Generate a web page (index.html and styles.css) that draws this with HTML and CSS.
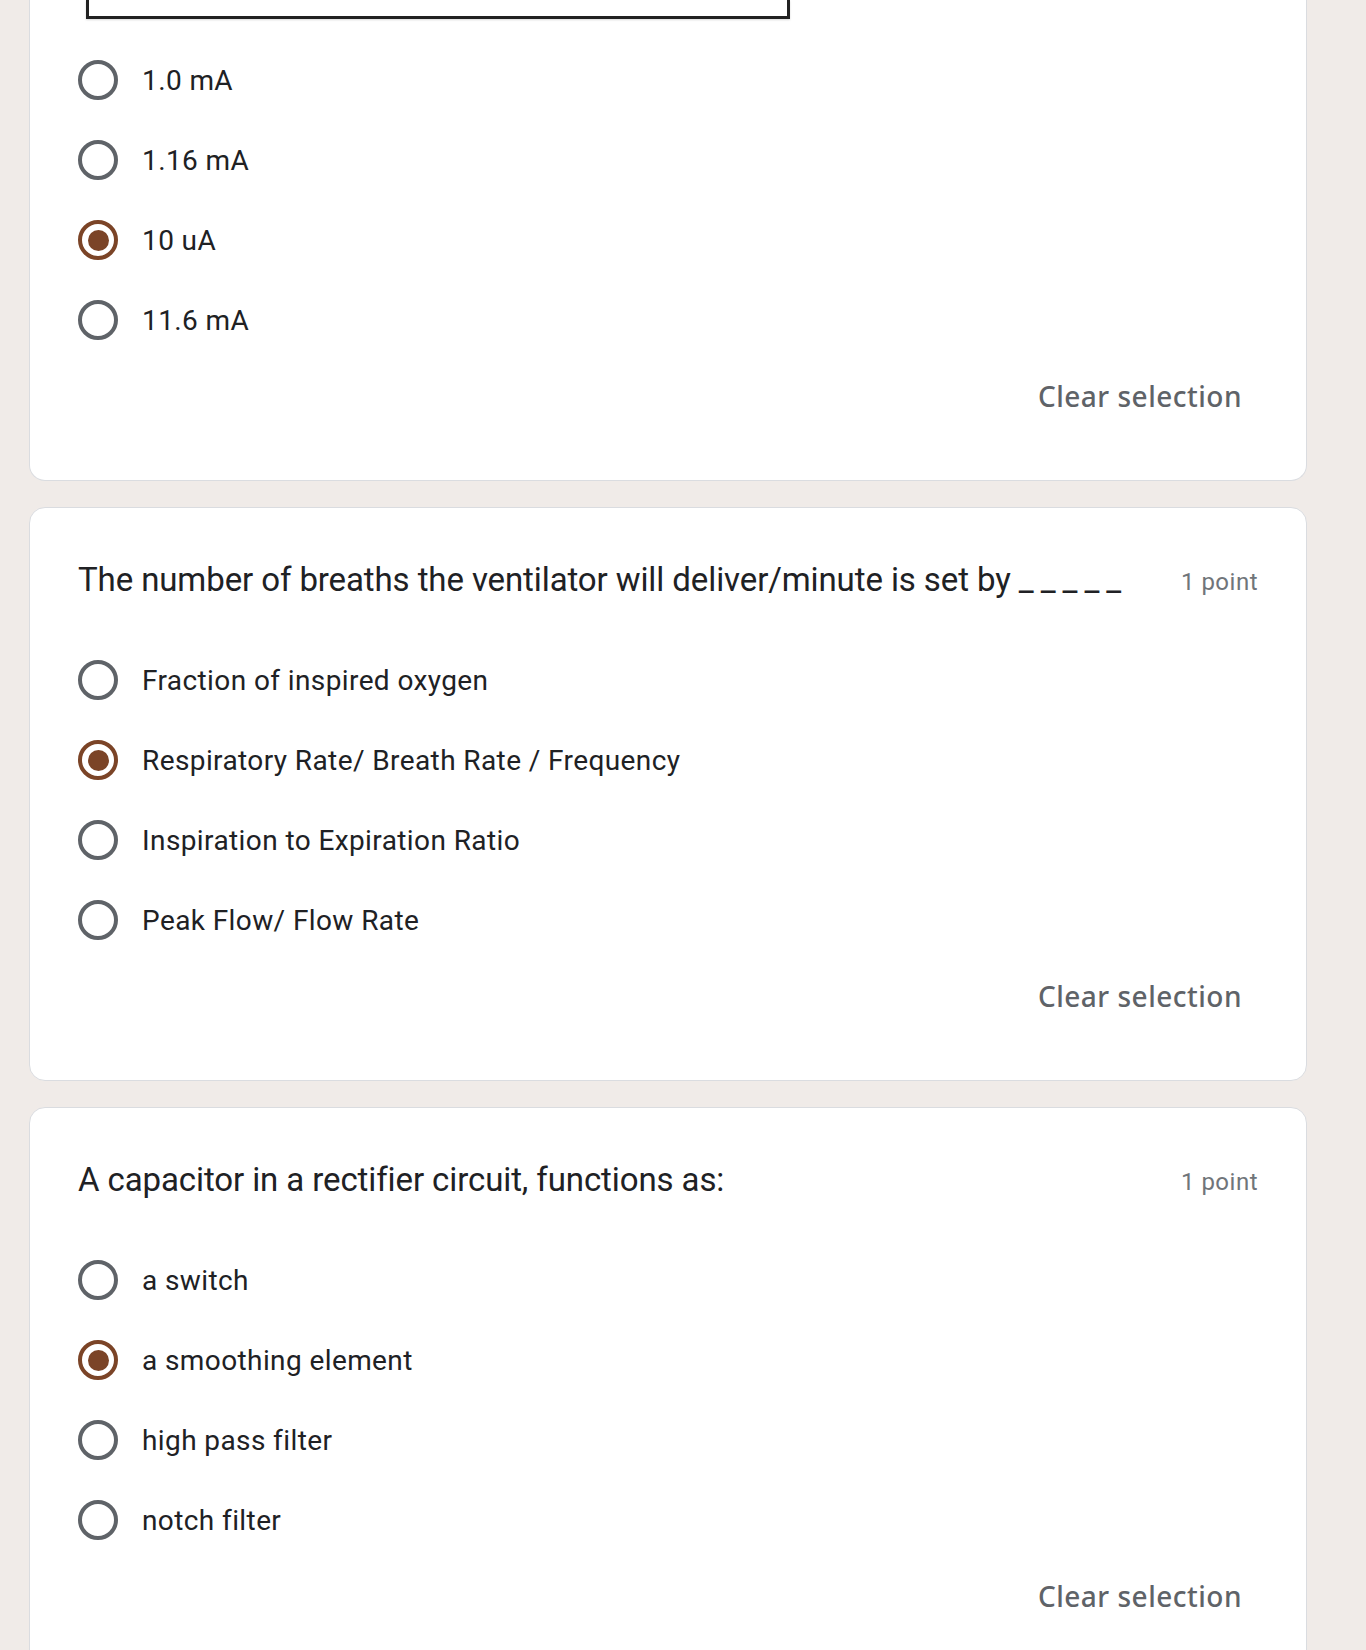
FILE: index.html
```html
<!DOCTYPE html>
<html lang="en">
<head>
<meta charset="utf-8">
<title>Quiz</title>
<link rel="stylesheet" href="styles.css">
</head>
<body>
<div class="page">
  <div class="card card-cut">
    <div class="figure"><div class="frame"></div></div>
    <div class="options first-options">
      <div class="option"><span class="radio"></span><span class="label">1.0 mA</span></div>
      <div class="option"><span class="radio"></span><span class="label">1.16 mA</span></div>
      <div class="option"><span class="radio checked"></span><span class="label">10 uA</span></div>
      <div class="option"><span class="radio"></span><span class="label">11.6 mA</span></div>
    </div>
    <div class="actions"><span class="clear">Clear selection</span></div>
  </div>

  <div class="card">
    <div class="head">
      <div class="title">The number of breaths the ventilator will deliver/minute is set by <span class="blank">_____</span></div>
      <div class="points">1 point</div>
    </div>
    <div class="options">
      <div class="option"><span class="radio"></span><span class="label">Fraction of inspired oxygen</span></div>
      <div class="option"><span class="radio checked"></span><span class="label">Respiratory Rate/ Breath Rate / Frequency</span></div>
      <div class="option"><span class="radio"></span><span class="label">Inspiration to Expiration Ratio</span></div>
      <div class="option"><span class="radio"></span><span class="label">Peak Flow/ Flow Rate</span></div>
    </div>
    <div class="actions"><span class="clear">Clear selection</span></div>
  </div>

  <div class="card">
    <div class="head">
      <div class="title">A capacitor in a rectifier circuit, functions as:</div>
      <div class="points">1 point</div>
    </div>
    <div class="options">
      <div class="option"><span class="radio"></span><span class="label">a switch</span></div>
      <div class="option"><span class="radio checked"></span><span class="label">a smoothing element</span></div>
      <div class="option"><span class="radio"></span><span class="label">high pass filter</span></div>
      <div class="option"><span class="radio"></span><span class="label">notch filter</span></div>
    </div>
    <div class="actions"><span class="clear">Clear selection</span></div>
  </div>
</div>
</body>
</html>
```

FILE: styles.css
```css
html, body {
  margin: 0;
  padding: 0;
  background: #f0ebe8;
}

.page {
  padding-left: 29px;
  width: 1278px;
  display: flex;
  flex-direction: column;
  gap: 26px;
}

.card {
  background: #ffffff;
  border: 1px solid #dadce0;
  border-radius: 16px;
  padding: 48px;
  display: flex;
  flex-direction: column;
}

.card-cut {
  border-top: none;
  border-top-left-radius: 0;
  border-top-right-radius: 0;
  padding-top: 0;
}

.figure {
  padding-left: 8px;
}

.frame {
  width: 698px;
  height: 16px;
  border: 3px solid #222222;
  border-top: none;
  box-shadow: 0 1px 2px rgba(0, 0, 0, 0.15);
}

.head {
  display: flex;
  justify-content: space-between;
  align-items: center;
  height: 48px;
}

.title {
  font-family: Roboto, "Liberation Sans", sans-serif;
  font-size: 33px;
  color: #202124;
  line-height: 48px;
  letter-spacing: -0.1px;
}

.blank {
  letter-spacing: 7px;
}

.points {
  font-family: Roboto, "Liberation Sans", sans-serif;
  font-size: 24px;
  color: #70757a;
  letter-spacing: 0.5px;
  padding-top: 4px;
}

.options {
  display: flex;
  flex-direction: column;
  margin-top: 36px;
}

.first-options {
  margin-top: 21px;
}

.option {
  display: flex;
  align-items: center;
  height: 80px;
  gap: 24px;
}

.radio {
  width: 40px;
  height: 40px;
  box-sizing: border-box;
  border: 4px solid #5f6368;
  border-radius: 50%;
  display: flex;
  align-items: center;
  justify-content: center;
  flex: none;
}

.radio.checked {
  border-color: #7b4427;
}

.radio.checked::after {
  content: "";
  width: 21px;
  height: 21px;
  border-radius: 50%;
  background: #7b4427;
}

.label {
  font-family: Roboto, "Liberation Sans", sans-serif;
  font-size: 28px;
  color: #202124;
  letter-spacing: 0.4px;
}

.actions {
  display: flex;
  justify-content: flex-end;
  align-items: center;
  height: 72px;
}

.clear {
  font-family: "Noto Sans", Roboto, sans-serif;
  font-weight: 500;
  font-size: 28px;
  letter-spacing: 0.5px;
  color: #5f6368;
  padding: 0 16px;
}
```
